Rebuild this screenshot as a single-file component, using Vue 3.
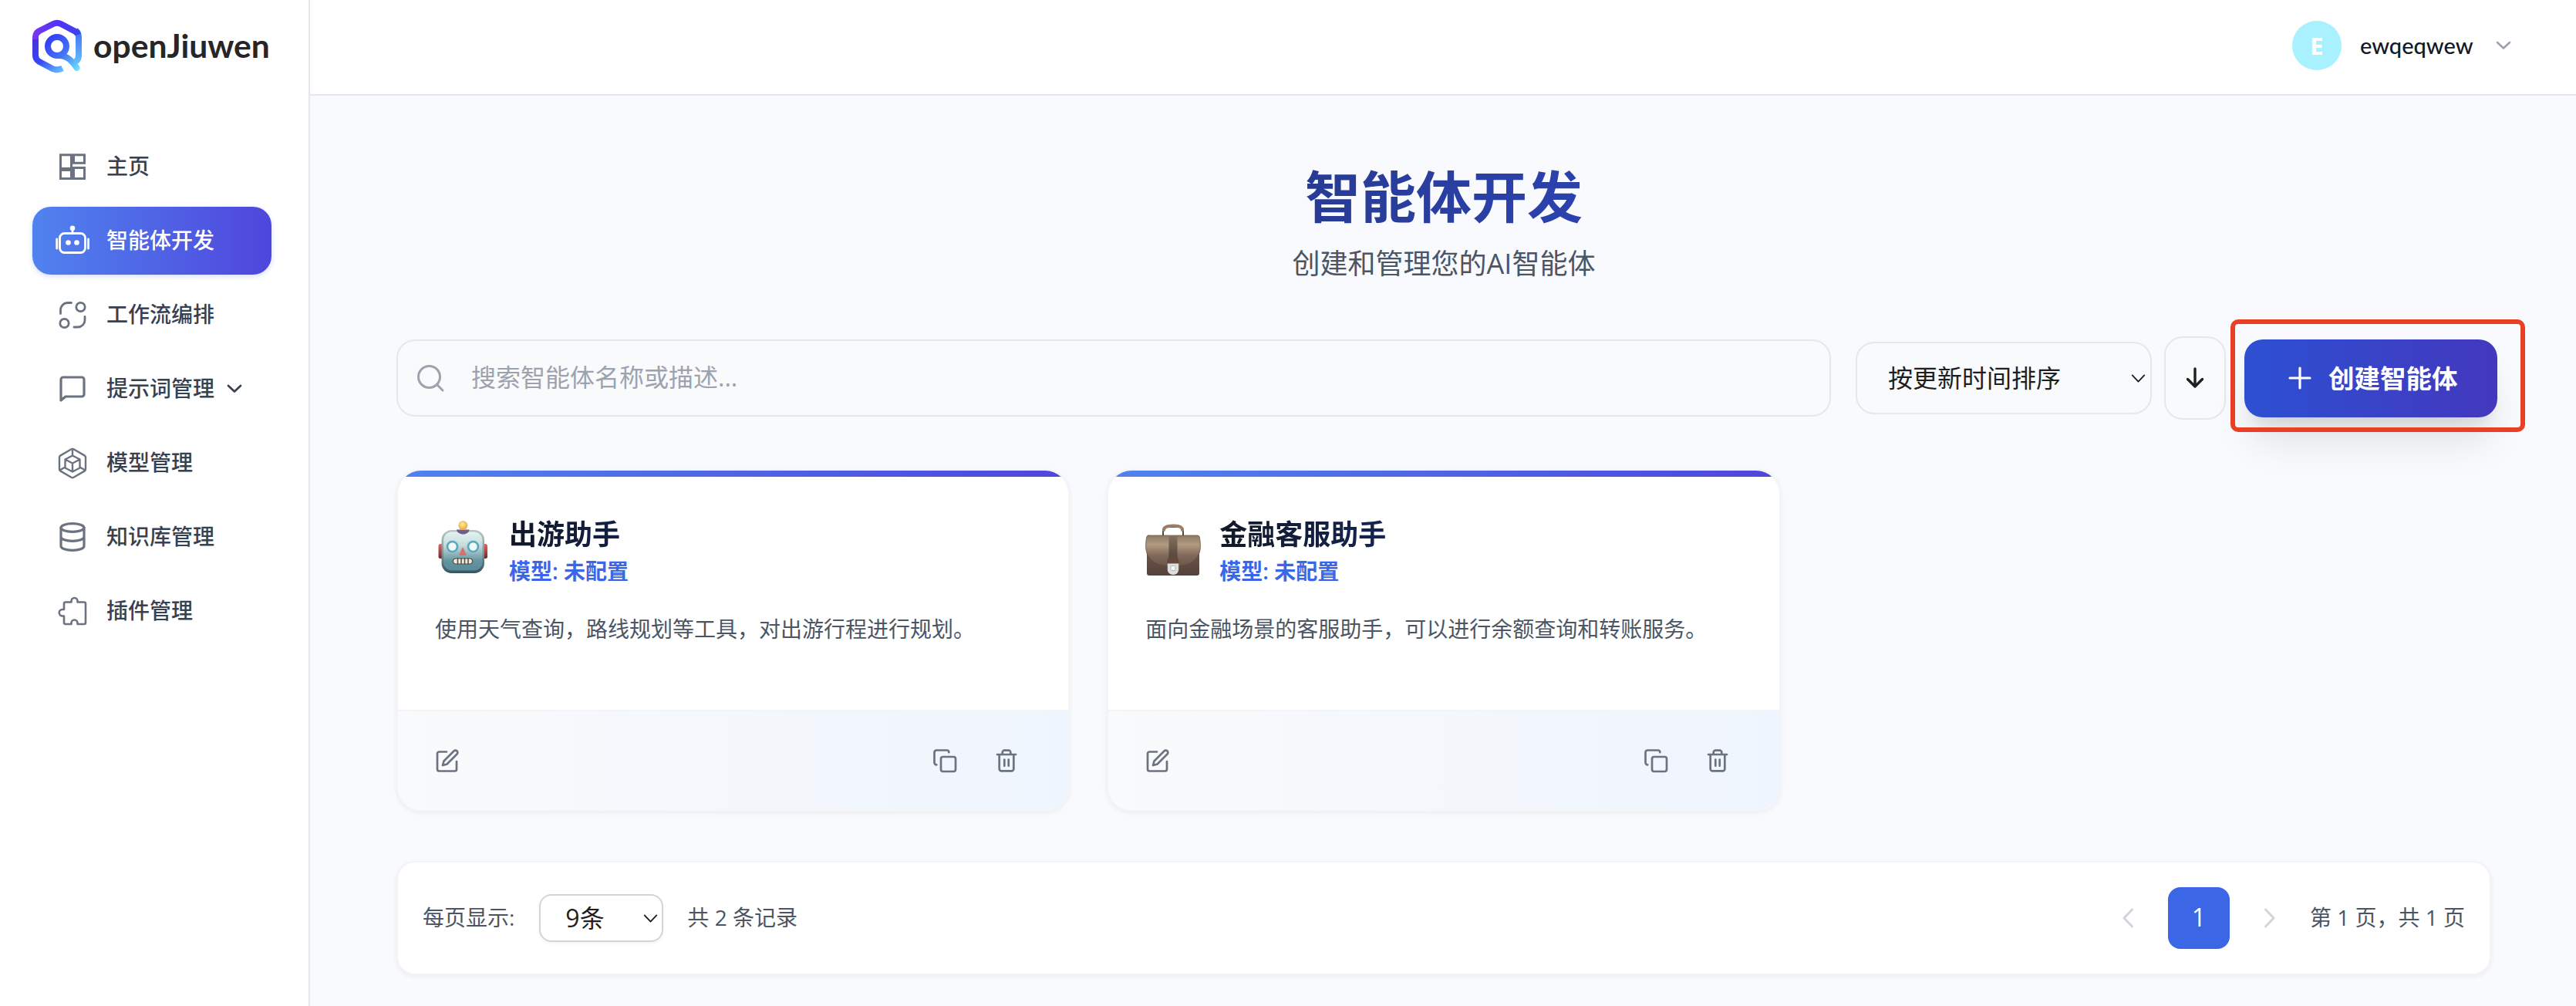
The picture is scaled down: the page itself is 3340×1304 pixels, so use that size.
<script setup>
import { ref } from 'vue'

const menu = [
  { id: 'home', label: '主页' },
  { id: 'agent', label: '智能体开发' },
  { id: 'workflow', label: '工作流编排' },
  { id: 'prompt', label: '提示词管理', expandable: true },
  { id: 'model', label: '模型管理' },
  { id: 'knowledge', label: '知识库管理' },
  { id: 'plugin', label: '插件管理' },
]

const agents = [
  { id: 1, icon: 'robot', name: '出游助手', desc: '使用天气查询，路线规划等工具，对出游行程进行规划。' },
  { id: 2, icon: 'briefcase', name: '金融客服助手', desc: '面向金融场景的客服助手，可以进行余额查询和转账服务。' },
]

const active = ref('agent')
const keyword = ref('')
</script>

<template>
  <div class="app">
    <aside class="sidebar">
      <div class="brand">
        <svg class="brand-logo" viewBox="0 0 64 68" fill="none">
          <defs>
            <linearGradient id="lg-top" x1="0" y1="20" x2="60" y2="20" gradientUnits="userSpaceOnUse">
              <stop offset="0" stop-color="#7a35f5" />
              <stop offset="0.6" stop-color="#4d35f5" />
              <stop offset="1" stop-color="#3c42ea" />
            </linearGradient>
            <linearGradient id="lg-left" x1="4" y1="22" x2="40" y2="64" gradientUnits="userSpaceOnUse">
              <stop offset="0" stop-color="#4a30d8" />
              <stop offset="0.5" stop-color="#3448f8" />
              <stop offset="1" stop-color="#62bcfc" />
            </linearGradient>
            <linearGradient id="lg-right" x1="58" y1="12" x2="60" y2="56" gradientUnits="userSpaceOnUse">
              <stop offset="0" stop-color="#3f6cf4" />
              <stop offset="1" stop-color="#66bffc" />
            </linearGradient>
            <linearGradient id="lg-q" x1="22" y1="24" x2="60" y2="64" gradientUnits="userSpaceOnUse">
              <stop offset="0" stop-color="#3340f8" />
              <stop offset="0.5" stop-color="#4474f4" />
              <stop offset="1" stop-color="#6be4ff" />
            </linearGradient>
          </defs>
          <path d="M56 13.500Q60 16.500 60 22V46Q60 51 56 54" stroke="url(#lg-right)" stroke-width="8" />
          <path d="M4 24V46Q4 51 9 54L26 63Q32 66 39 62.500" stroke="url(#lg-left)" stroke-width="8" />
          <path d="M4 25V22Q4 17 9 14L27 5Q32 2.500 37 5L55 14.500Q58 16 59 19" stroke="url(#lg-top)" stroke-width="8" />
          <circle cx="32" cy="34" r="12" stroke="url(#lg-q)" stroke-width="8" />
          <path d="M34 46C46 46 52 54 57.500 62" stroke="url(#lg-q)" stroke-width="8" stroke-linecap="round" />
        </svg>
        <span class="brand-name">openJiuwen</span>
      </div>

      <nav class="menu">
        <a
          v-for="item in menu"
          :key="item.id"
          class="menu-item"
          :class="{ active: active === item.id }"
          @click="active = item.id"
        >
          <svg v-if="item.id === 'home'" class="menu-icon" viewBox="0 0 40 40" stroke-width="3">
            <rect x="4.500" y="4.800" width="14" height="17.700" />
            <rect x="21.500" y="4.800" width="14" height="10.500" />
            <rect x="4.500" y="24.500" width="14" height="11" />
            <rect x="21.500" y="21.500" width="14" height="14" />
          </svg>
          <svg v-else-if="item.id === 'agent'" class="menu-icon" viewBox="0 0 40 40" stroke-width="2.800">
            <rect x="3.500" y="10.500" width="33" height="25" rx="6" />
            <path d="M20 4v6M-.300 18v12M40.500 18v12" />
            <circle class="solid" cx="20" cy="3.700" r="3.300" />
            <circle class="solid" cx="14.500" cy="22.500" r="3.300" />
            <circle class="solid" cx="25.500" cy="22.500" r="3.300" />
          </svg>
          <svg v-else-if="item.id === 'workflow'" class="menu-icon" viewBox="0 0 40 40" stroke-width="2.800">
            <path d="M4.500 18.500V14a9.500 9.500 0 0 1 9.500-9.500h4.500" />
            <path d="M36 22.500V27a9 9 0 0 1-9 9h-5" />
            <circle cx="30.500" cy="10" r="5.700" />
            <circle cx="9.500" cy="31" r="5.700" />
          </svg>
          <svg v-else-if="item.id === 'prompt'" class="menu-icon" viewBox="0 0 40 40" stroke-width="3.200">
            <path d="M5 35V8a3 3 0 0 1 3-3h24a3 3 0 0 1 3 3v19a3 3 0 0 1-3 3H11z" />
          </svg>
          <svg v-else-if="item.id === 'model'" class="menu-icon" viewBox="0 0 40 40" stroke-width="2.400">
            <path d="M18.500 2.300a3 3 0 0 1 3 0l14 8.100a3 3 0 0 1 1.500 2.600v15a3 3 0 0 1-1.500 2.600l-14 8.100a3 3 0 0 1-3 0l-14-8.100a3 3 0 0 1-1.500-2.600V13a3 3 0 0 1 1.500-2.600z" />
            <path d="M20 10.500l9.500 5v11l-9.500 5-9.500-5v-11zM10.500 15.500l9.500 5 9.500-5M20 20.500v11M20 2v8.500M3.500 29.500l7-4M36.500 29.500l-7-4" />
          </svg>
          <svg v-else-if="item.id === 'knowledge'" class="menu-icon" viewBox="0 0 40 40" stroke-width="3.200">
            <ellipse cx="20" cy="8" rx="15" ry="5.300" />
            <path d="M5 8v24c0 2.900 6.700 5.300 15 5.300S35 34.900 35 32V8M5 20c0 2.900 6.700 5.300 15 5.300S35 22.900 35 20" />
          </svg>
          <svg v-else class="menu-icon" viewBox="0 0 40 40" stroke-width="2.600">
            <path d="M9 15V10.500a2 2 0 0 1 2-2h7.500V7a4 4 0 0 1 8 0v1.500H35a2 2 0 0 1 2 2V35a2 2 0 0 1-2 2h-8.500v-1.500a4 4 0 0 0-8 0V37H11a2 2 0 0 1-2-2v-8.500H7a4.200 4.200 0 0 1 0-8.500h2z" />
          </svg>
          <span class="menu-label">{{ item.label }}</span>
          <svg v-if="item.expandable" class="menu-arrow" viewBox="0 0 20 12">
            <path d="M2 2l8 7.500L18 2" />
          </svg>
        </a>
      </nav>
    </aside>

    <div class="page">
      <header class="topbar">
        <div class="avatar">E</div>
        <span class="user-name">ewqeqwew</span>
        <svg class="user-arrow" viewBox="0 0 20 12"><path d="M2 2l8 7.500L18 2" /></svg>
      </header>

      <main class="content">
        <h1 class="title"><span>智能体开发</span></h1>
        <p class="subtitle">创建和管理您的AI智能体</p>

        <div class="toolbar">
          <label class="search">
            <svg class="search-icon" viewBox="0 0 36 36">
              <circle cx="16.500" cy="16.500" r="14" />
              <path d="M26.500 26.500l7.500 7.500" />
            </svg>
            <input v-model="keyword" type="text" placeholder="搜索智能体名称或描述..." />
          </label>
          <div class="sort">
            <span class="select-text">按更新时间排序</span>
            <svg class="select-arrow" viewBox="0 0 20 12"><path d="M1.500 1.500l8.500 9 8.500-9" /></svg>
          </div>
          <button class="order" type="button">
            <svg viewBox="0 0 24 28"><path d="M12 2v23M2.500 15.500L12 25l9.500-9.500" /></svg>
          </button>
          <div class="create-wrap">
            <button class="create" type="button">
              <svg viewBox="0 0 30 30"><path d="M15 2v26M2 15h26" /></svg>
              <span class="select-text">创建智能体</span>
            </button>
            <div class="highlight"></div>
          </div>
        </div>

        <div class="cards">
          <article v-for="agent in agents" :key="agent.id" class="card">
            <div class="card-body">
              <div class="card-head">
                <svg v-if="agent.icon === 'robot'" class="card-icon" viewBox="0 0 72 72">
                  <defs>
                    <linearGradient id="rb-face" x1="0" y1="0" x2="0" y2="1">
                      <stop offset="0" stop-color="#e2f3f1" />
                      <stop offset="0.350" stop-color="#c5dcdc" />
                      <stop offset="0.750" stop-color="#6394a0" />
                      <stop offset="1" stop-color="#5a8b99" />
                    </linearGradient>
                    <linearGradient id="rb-edge" x1="0" y1="0" x2="0" y2="1">
                      <stop offset="0" stop-color="#b9c8c4" />
                      <stop offset="0.500" stop-color="#7a9a9c" />
                      <stop offset="1" stop-color="#35545f" />
                    </linearGradient>
                    <linearGradient id="rb-ear" x1="0" y1="0" x2="0" y2="1">
                      <stop offset="0" stop-color="#f0625c" />
                      <stop offset="1" stop-color="#70262a" />
                    </linearGradient>
                    <radialGradient id="rb-bulb" cx="0.450" cy="0.400" r="0.600">
                      <stop offset="0" stop-color="#fff0a0" />
                      <stop offset="1" stop-color="#efa040" />
                    </radialGradient>
                  </defs>
                  <rect x="4.500" y="35" width="7" height="19" rx="2.500" fill="url(#rb-ear)" />
                  <rect x="61" y="35" width="7" height="19" rx="2.500" fill="url(#rb-ear)" />
                  <rect x="8.500" y="17" width="55.500" height="56" rx="13" fill="url(#rb-edge)" />
                  <rect x="11" y="19.500" width="50.500" height="50" rx="11" fill="url(#rb-face)" />
                  <path d="M28 16.500h16.500c0 3.500-4 6-8 6s-8.500-2.500-8.500-6z" fill="#6d5f88" />
                  <circle cx="36.300" cy="11" r="6" fill="url(#rb-bulb)" />
                  <circle cx="22.500" cy="38.500" r="6.500" fill="#eefafa" stroke="#5ba5bd" stroke-width="2.600" />
                  <circle cx="49.500" cy="38.500" r="6.500" fill="#eefafa" stroke="#5ba5bd" stroke-width="2.600" />
                  <path d="M36 39l5 11H31z" fill="#d9706c" />
                  <rect x="23.500" y="54" width="25" height="7" rx="3.500" fill="#f0ead8" stroke="#4d4c48" stroke-width="1.200" />
                  <path d="M29.500 54v7M34 54v7M38.500 54v7M43 54v7" stroke="#4d4c48" stroke-width="1.500" />
                </svg>
                <svg v-else class="card-icon" viewBox="0 0 72 72">
                  <defs>
                    <linearGradient id="bc-body" x1="0" y1="0" x2="0" y2="1">
                      <stop offset="0" stop-color="#7a6253" />
                      <stop offset="1" stop-color="#55423b" />
                    </linearGradient>
                    <linearGradient id="bc-flap" x1="0" y1="0" x2="0" y2="1">
                      <stop offset="0" stop-color="#8f7a66" />
                      <stop offset="0.300" stop-color="#b09a80" />
                      <stop offset="0.650" stop-color="#80695a" />
                      <stop offset="1" stop-color="#6a5449" />
                    </linearGradient>
                    <linearGradient id="bc-strap" x1="0" y1="0" x2="0" y2="1">
                      <stop offset="0" stop-color="#85705e" />
                      <stop offset="1" stop-color="#55463a" />
                    </linearGradient>
                  </defs>
                  <path d="M23 24V18c0-3 2-5 5-5h16c3 0 5 2 5 5v6" fill="none" stroke="#55443a" stroke-width="2" />
                  <path d="M24 17c0-3.500 4-5.500 12-5.500S48 13.500 48 17" fill="none" stroke="#9c7d69" stroke-width="4" />
                  <rect x="2" y="26" width="68" height="50" rx="3" fill="url(#bc-body)" />
                  <path d="M4 24h64q2 0 2.500 3C73 42 71 52 60 59c-8 4.500-16 5-24 5s-16-.500-24-5C1 52-1 42 1.500 27Q2 24 4 24z" fill="url(#bc-flap)" stroke="#5f4b40" stroke-width="0.700" />
                  <path d="M30.500 24h11v29h-11z" fill="url(#bc-strap)" />
                  <path d="M28.500 60v-2c0-4 3-7.500 7.500-7.500s7.500 3.500 7.500 7.500v2z" fill="#65483d" />
                  <path d="M28.800 60.500h14.400v7.500c0 4-3 7-7.200 7s-7.200-3-7.200-7z" fill="#dedede" />
                  <rect x="33" y="63.500" width="6" height="6" rx="1" fill="#f7f7f7" stroke="#b8b8b8" />
                </svg>
                <div class="card-info">
                  <h3 class="card-title">{{ agent.name }}</h3>
                  <p class="card-model">模型: 未配置</p>
                </div>
              </div>
              <p class="card-desc">{{ agent.desc }}</p>
            </div>
            <div class="card-foot">
              <button class="icon-btn edit" type="button">
                <svg viewBox="0 0 32 32">
                  <path d="M15 4.500H5.500a2.500 2.500 0 0 0-2.500 2.500v20A2.500 2.500 0 0 0 5.500 29.500h20a2.500 2.500 0 0 0 2.500-2.500V17" />
                  <path d="M24.500 3.500a2.800 2.800 0 0 1 4 4L15.500 20.500l-5.500 1.500 1.500-5.500z" />
                </svg>
              </button>
              <button class="icon-btn" type="button">
                <svg viewBox="0 0 32 32">
                  <rect x="11" y="11" width="19" height="19" rx="2.700" />
                  <path d="M5.300 21.300C3.800 21.300 2.500 20 2.500 18.500V5.200c0-1.500 1.300-2.700 2.800-2.700h13.300c1.500 0 2.700 1.200 2.700 2.700" />
                </svg>
              </button>
              <button class="icon-btn" type="button">
                <svg viewBox="0 0 32 32">
                  <path d="M4 8h24M25.300 8v18.700c0 1.300-1.300 2.600-2.600 2.600H9.300c-1.300 0-2.600-1.300-2.600-2.600V8M10.700 8V5.300c0-1.300 1.300-2.600 2.600-2.600h5.400c1.300 0 2.600 1.300 2.600 2.600V8M13.300 14.700v8M18.700 14.700v8" />
                </svg>
              </button>
            </div>
          </article>
        </div>

        <div class="pager">
          <span class="pager-text">每页显示:</span>
          <div class="page-size">
            <span class="select-text">9条</span>
            <svg class="select-arrow" viewBox="0 0 20 12"><path d="M1.500 1.500l8.500 9 8.500-9" /></svg>
          </div>
          <span class="pager-text">共 2 条记录</span>
          <div class="pager-nav">
            <button class="page-step" type="button">
              <svg viewBox="0 0 16 28"><path d="M13.500 3L3 14l10.500 11" /></svg>
            </button>
            <button class="page-num" type="button">1</button>
            <button class="page-step" type="button">
              <svg viewBox="0 0 16 28"><path d="M2.500 3L13 14 2.500 25" /></svg>
            </button>
          </div>
          <span class="pager-text">第 1 页，共 1 页</span>
        </div>
      </main>
    </div>
  </div>
</template>

<style>
body {
  background: #f8fafe;
}
</style>

<style scoped>
.app {
  display: flex;
  height: 1304px;
  overflow: hidden;
  background: #f8fafe;
  font-family: "Open Sans", "Noto Sans CJK SC", sans-serif;
  color: #1f1f1f;
}

.app *,
.app *::before {
  box-sizing: border-box;
}

h1,
h3,
p {
  margin: 0;
}

button {
  padding: 0;
  border: none;
  background: none;
  font-family: inherit;
}

svg {
  display: block;
  flex-shrink: 0;
  overflow: visible;
}

svg path {
  stroke-linecap: round;
  stroke-linejoin: round;
}

.sidebar {
  width: 402px;
  flex-shrink: 0;
  background: #fff;
  border-right: 2px solid #e5e7eb;
  padding: 0 48px 0 42px;
}

.brand {
  display: flex;
  align-items: center;
  height: 120px;
  gap: 15px;
}

.brand-logo {
  width: 64px;
  height: 68px;
}

.brand-logo path {
  stroke-linecap: butt;
}

.brand-logo path:last-child {
  stroke-linecap: round;
}

.brand-name {
  padding-bottom: 2px;
  font-family: Lato, sans-serif;
  font-size: 42.6px;
  font-weight: 700;
  line-height: 60px;
  color: #262626;
}

.menu {
  display: flex;
  flex-direction: column;
  gap: 8px;
  padding-top: 52px;
}

.menu-item {
  display: flex;
  align-items: center;
  height: 88px;
  padding-left: 32px;
  border-radius: 24px;
  font-size: 28px;
  font-weight: 500;
  color: #374151;
  cursor: pointer;
}

.menu-label,
.select-text,
.pager-text {
  padding-bottom: 4px;
}

.menu-icon {
  width: 40px;
  height: 40px;
  margin-right: 24px;
  fill: none;
  stroke: #6b7280;
}

.menu-item.active {
  background: linear-gradient(90deg, #5083ef, #4f46dc);
  color: #fff;
  box-shadow: 0 2px 6px rgba(80, 110, 235, 0.25);
}

.menu-item.active .menu-icon {
  stroke: #fff;
}

.menu-icon .solid {
  fill: #fff;
  stroke: none;
}

.menu-arrow {
  width: 20px;
  height: 12px;
  margin-left: 16px;
  fill: none;
  stroke: #374151;
  stroke-width: 2.7;
}

.page {
  flex: 1;
  min-width: 0;
}

.topbar {
  display: flex;
  align-items: center;
  justify-content: flex-end;
  height: 124px;
  padding: 0 84px 4px 0;
  background: #fff;
  border-bottom: 2px solid #e5e7eb;
}

.avatar {
  display: flex;
  align-items: center;
  justify-content: center;
  width: 64px;
  height: 64px;
  border-radius: 50%;
  background: #a9f1fe;
  color: #fff;
  font-size: 31px;
  font-weight: 700;
}

.user-name {
  width: 145px;
  margin: 0 31px 0 24px;
  padding-bottom: 2px;
  font-family: Lato, sans-serif;
  font-size: 29px;
  font-weight: 500;
  color: #111827;
}

.user-arrow {
  width: 20px;
  height: 12px;
  fill: none;
  stroke: #9ca3af;
  stroke-width: 2.7;
}

.content {
  padding: 82px 110px 0 112px;
}

.title {
  font-size: 72px;
  font-weight: 700;
  line-height: 96px;
  text-align: center;
}

.title span {
  background: linear-gradient(90deg, #283b93, #2b42ae);
  background-clip: text;
  -webkit-background-clip: text;
  color: transparent;
}

.subtitle {
  margin-top: 14px;
  font-size: 36px;
  line-height: 52px;
  text-align: center;
  color: #4b5563;
}

.toolbar {
  display: flex;
  align-items: center;
  height: 108px;
  margin-top: 68px;
  margin-right: -8px;
  font-size: 32px;
}

.search {
  display: flex;
  align-items: center;
  width: 1860px;
  height: 100px;
  padding: 0 24px;
  border: 2px solid #e5e7eb;
  border-radius: 24px;
  background: #f9fafc;
}

.search-icon {
  width: 36px;
  height: 36px;
  fill: none;
  stroke: #9ca3af;
  stroke-width: 3;
}

.search input {
  flex: 1;
  margin-left: 35px;
  padding: 0 0 4px;
  border: none;
  outline: none;
  background: transparent;
  font: inherit;
  color: #1f1f1f;
}

.search input::placeholder {
  color: #9ca3af;
  opacity: 1;
}

.sort {
  display: flex;
  align-items: center;
  justify-content: space-between;
  width: 384px;
  height: 94px;
  margin-left: 32px;
  padding: 0 6px 0 40px;
  border: 2px solid #e5e7eb;
  border-radius: 24px;
  background: #f9fafc;
}

.select-arrow {
  width: 19px;
  height: 11px;
  fill: none;
  stroke: #1f1f1f;
  stroke-width: 2;
}

.order {
  display: flex;
  align-items: center;
  justify-content: center;
  width: 80px;
  height: 108px;
  margin-left: 16px;
  border: 2px solid #e5e7eb;
  border-radius: 24px;
  background: #f9fafc;
}

.order svg {
  width: 24px;
  height: 28px;
  fill: none;
  stroke: #1f1f1f;
  stroke-width: 3.4;
}

.create-wrap {
  position: relative;
  margin-left: 24px;
}

.create {
  display: flex;
  align-items: center;
  width: 328px;
  height: 101px;
  padding-left: 57px;
  border-radius: 24px;
  background: linear-gradient(90deg, #2d50d2, #4338be);
  box-shadow: 0 40px 50px -10px rgba(0, 0, 0, 0.1), 0 16px 20px -12px rgba(0, 0, 0, 0.1);
  color: #fff;
  font-size: 33.5px;
  font-weight: 700;
}

.create svg {
  width: 30px;
  height: 30px;
  margin-right: 22px;
  fill: none;
  stroke: #fff;
  stroke-width: 3.2;
}

.highlight {
  position: absolute;
  top: -26px;
  left: -18px;
  width: 382px;
  height: 146px;
  border: 6px solid #e93f24;
  border-radius: 10px;
  pointer-events: none;
}

.cards {
  display: grid;
  grid-template-columns: repeat(3, 1fr);
  gap: 48px;
  margin-top: 64px;
}

.card {
  position: relative;
  height: 444px;
  overflow: hidden;
  border: 2px solid #f3f4f6;
  border-radius: 32px;
  background: #fff;
  box-shadow: 0 2px 6px rgba(0, 0, 0, 0.06);
}

.card::before {
  content: "";
  position: absolute;
  top: 0;
  left: 0;
  right: 0;
  height: 8px;
  background: linear-gradient(90deg, #5083ef, #4f46dc);
}

.card-body {
  height: 310px;
  padding: 57px 48px 0;
}

.card-head {
  display: flex;
  gap: 24px;
}

.card-icon {
  width: 72px;
  height: 72px;
  margin-top: 3px;
}

.card-info {
  flex: 1;
}

.card-title {
  font-size: 36px;
  font-weight: 700;
  line-height: 52px;
  background: linear-gradient(90deg, #111827, #1e40af);
  background-clip: text;
  -webkit-background-clip: text;
  color: transparent;
}

.card-model {
  margin-top: 1px;
  font-size: 28px;
  font-weight: 600;
  line-height: 40px;
  color: #3b66e6;
}

.card-desc {
  margin-top: 32px;
  font-size: 28px;
  line-height: 46px;
  color: #4b5563;
}

.card-foot {
  display: flex;
  align-items: center;
  gap: 16px;
  height: 130px;
  padding: 0 48px 0 32px;
  border-top: 2px solid #f3f4f6;
  background: linear-gradient(90deg, #f9fafb, #eff5fe);
}

.icon-btn {
  display: flex;
  align-items: center;
  justify-content: center;
  width: 64px;
  height: 64px;
}

.icon-btn.edit {
  margin-right: auto;
}

.icon-btn svg {
  width: 32px;
  height: 32px;
  fill: none;
  stroke: #6b7280;
  stroke-width: 2.7;
}

.pager {
  display: flex;
  align-items: center;
  height: 148px;
  margin-top: 64px;
  padding: 0 32px;
  border: 2px solid #f3f4f6;
  border-radius: 24px;
  background: #fff;
  box-shadow: 0 2px 6px rgba(0, 0, 0, 0.06);
  font-size: 28px;
  color: #4b5563;
}

.page-size {
  display: flex;
  align-items: center;
  justify-content: space-between;
  width: 161px;
  height: 62px;
  margin: 0 31px 0 32px;
  padding: 0 5px 0 32px;
  border: 2px solid #d1d5db;
  border-radius: 16px;
  box-shadow: 0 2px 4px rgba(0, 0, 0, 0.05);
  font-size: 32px;
  color: #1f1f1f;
}

.pager-nav {
  display: flex;
  gap: 16px;
  margin: 0 16px 0 auto;
}

.page-step {
  display: flex;
  align-items: center;
  justify-content: center;
  width: 72px;
  height: 80px;
}

.page-step svg {
  width: 16px;
  height: 28px;
  fill: none;
  stroke: #d1d5db;
  stroke-width: 3;
}

.page-num {
  width: 80px;
  height: 80px;
  padding-bottom: 3px;
  border-radius: 16px;
  background: #3b66e6;
  color: #fff;
  font-size: 32px;
}
</style>
